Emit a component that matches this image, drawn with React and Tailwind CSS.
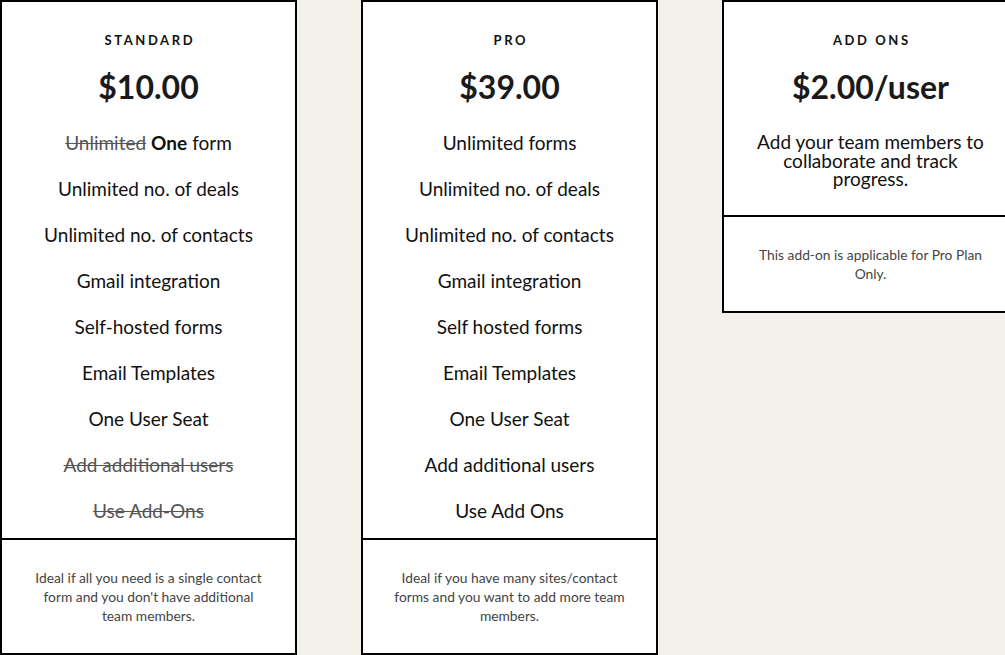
import React from "react";

const font = { fontFamily: "Lato, 'Noto Sans', sans-serif" };

function Feature({ children }) {
  return (
    <li className="h-[46px] flex items-center justify-center text-[19px] text-[#111]">
      {children}
    </li>
  );
}

function Struck({ children }) {
  return <span className="line-through text-[#555]">{children}</span>;
}

function Card({ title, price, children, footer }) {
  return (
    <div className="w-[297px] shrink-0 bg-white border-2 border-black flex flex-col">
      <div className="flex flex-col items-center pt-[30px]">
        <div className="text-[13px] leading-[16px] font-bold tracking-[0.2em] text-[#111] pl-[0.2em]">
          {title}
        </div>
        <div className="mt-[23px] text-[32px] leading-[32px] font-bold text-[#1a1a1a]">
          {price}
        </div>
        {children}
      </div>
      <div className="border-t-2 border-black px-[28px] pt-[28px] pb-[28px] text-center text-[13.8px] leading-[19px] text-[#444]">
        {footer}
      </div>
    </div>
  );
}

export default function App() {
  return (
    <div
      className="w-[1005px] h-[655px] overflow-hidden bg-[#f3efe9] flex items-start gap-[64px]"
      style={font}
    >
      <Card
        title="STANDARD"
        price="$10.00"
        footer="Ideal if all you need is a single contact form and you don't have additional team members."
      >
        <ul className="mt-[17px] mb-[4px] w-full">
          <Feature>
            <Struck>Unlimited</Struck>
            <span className="font-bold ml-[5px]">One</span>
            <span className="ml-[5px]">form</span>
          </Feature>
          <Feature>Unlimited no. of deals</Feature>
          <Feature>Unlimited no. of contacts</Feature>
          <Feature>Gmail integration</Feature>
          <Feature>Self-hosted forms</Feature>
          <Feature>Email Templates</Feature>
          <Feature>One User Seat</Feature>
          <Feature>
            <Struck>Add additional users</Struck>
          </Feature>
          <Feature>
            <Struck>Use Add-Ons</Struck>
          </Feature>
        </ul>
      </Card>
      <Card
        title="PRO"
        price="$39.00"
        footer="Ideal if you have many sites/contact forms and you want to add more team members."
      >
        <ul className="mt-[17px] mb-[4px] w-full">
          <Feature>Unlimited forms</Feature>
          <Feature>Unlimited no. of deals</Feature>
          <Feature>Unlimited no. of contacts</Feature>
          <Feature>Gmail integration</Feature>
          <Feature>Self hosted forms</Feature>
          <Feature>Email Templates</Feature>
          <Feature>One User Seat</Feature>
          <Feature>Add additional users</Feature>
          <Feature>Use Add Ons</Feature>
        </ul>
      </Card>
      <Card
        title="ADD ONS"
        price="$2.00/user"
        footer="This add-on is applicable for Pro Plan Only."
      >
        <p className="mt-[30px] mb-[26px] px-[30px] text-center text-[19px] leading-[18.5px] text-[#111]">
          Add your team members to collaborate and track progress.
        </p>
      </Card>
    </div>
  );
}
